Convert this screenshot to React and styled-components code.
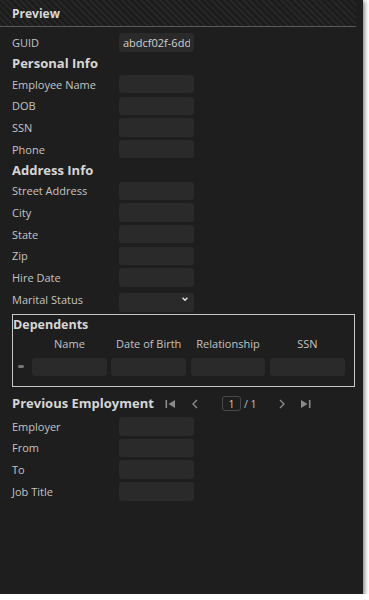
import React from 'react';
import styled, { createGlobalStyle } from 'styled-components';

const personal = ['Employee Name', 'DOB', 'SSN', 'Phone'];
const address = ['Street Address', 'City', 'State', 'Zip', 'Hire Date'];
const employment = ['Employer', 'From', 'To', 'Job Title'];
const depColumns = ['Name', 'Date of Birth', 'Relationship', 'SSN'];

export default function App() {
  return (
    <>
      <GlobalStyle />
      <Panel>
        <Content>
          <Header>Preview</Header>
          <Body>
            <Row>
              <Label>GUID</Label>
              <Field defaultValue="abdcf02f-6dd4-4c2e" readOnly />
            </Row>

            <SectionTitle>Personal Info</SectionTitle>
            {personal.map((l) => (
              <Row key={l}>
                <Label>{l}</Label>
                <Field />
              </Row>
            ))}

            <SectionTitle>Address Info</SectionTitle>
            {address.map((l) => (
              <Row key={l}>
                <Label>{l}</Label>
                <Field />
              </Row>
            ))}
            <Row>
              <Label>Marital Status</Label>
              <SelectWrap>
                <Select defaultValue="">
                  <option value=""></option>
                  <option>Single</option>
                  <option>Married</option>
                </Select>
                <Chevron viewBox="0 0 10 10">
                  <path d="M2 3.5 L5 6.5 L8 3.5" />
                </Chevron>
              </SelectWrap>
            </Row>

            <DepBox>
              <DepTitle>Dependents</DepTitle>
              <DepGrid>
                <span />
                {depColumns.map((c) => (
                  <ColHead key={c}>{c}</ColHead>
                ))}
                <Dash />
                {depColumns.map((c) => (
                  <Field key={c} $wide />
                ))}
              </DepGrid>
            </DepBox>

            <PrevHeader>
              <PrevTitle>Previous Employment</PrevTitle>
              <Pager>
                <PagerIcon viewBox="0 0 11 10" $w={11} $fill>
                  <rect x="0.5" y="1" width="1.6" height="8" />
                  <path d="M10 1 L10 9 L3.5 5 Z" />
                </PagerIcon>
                <PagerIcon viewBox="0 0 6 10" $w={6} $gap={16}>
                  <path d="M5 1 L1 5 L5 9" />
                </PagerIcon>
                <PageBox>1</PageBox>
                <PageCount>/ 1</PageCount>
                <PagerIcon viewBox="0 0 6 10" $w={6} $gap={22}>
                  <path d="M1 1 L5 5 L1 9" />
                </PagerIcon>
                <PagerIcon viewBox="0 0 11 10" $w={11} $gap={15} $fill>
                  <path d="M1 1 L1 9 L7.5 5 Z" />
                  <rect x="8.9" y="1" width="1.6" height="8" />
                </PagerIcon>
              </Pager>
            </PrevHeader>
            {employment.map((l) => (
              <Row key={l}>
                <Label>{l}</Label>
                <Field />
              </Row>
            ))}
          </Body>
        </Content>
      </Panel>
    </>
  );
}

/******************** styled components ************************/

const GlobalStyle = createGlobalStyle`
  body {
    margin: 0;
    background: #ffffff;
    font-family: 'Open Sans', 'Noto Sans', sans-serif;
  }
`;

const Panel = styled.div`
  width: 363px;
  height: 595px;
  background: #1e1e1e;
  box-shadow: 2px 2px 4px rgba(0, 0, 0, 0.45);
  padding-right: 7px;
  box-sizing: border-box;
`;

const Content = styled.div`
  width: 356px;
`;

const Header = styled.div`
  height: 26px;
  border-top: 1px solid #3c3c3c;
  border-bottom: 1px solid #5a5a5a;
  box-sizing: content-box;
  margin-top: -1px;
  padding-left: 12px;
  display: flex;
  align-items: center;
  font-size: 12px;
  font-weight: 700;
  color: #d8d8d8;
  background: repeating-linear-gradient(
    45deg,
    #262626 0px,
    #262626 2px,
    #1c1c1c 2px,
    #1c1c1c 4.5px
  );
`;

const Body = styled.div`
  padding: 4.7px 0 0 12px;
`;

const Row = styled.div`
  display: grid;
  grid-template-columns: 107px 75px;
  align-items: center;
  height: 21.67px;
`;

const Label = styled.span`
  font-size: 11px;
  color: #c4c4c4;
  white-space: nowrap;
`;

const Field = styled.input`
  box-sizing: border-box;
  width: ${(p) => (p.$wide ? '100%' : '75px')};
  height: 18.5px;
  border: none;
  border-radius: 3px;
  background: #2a2a2a;
  color: #d0d0d0;
  font-family: 'Open Sans', sans-serif;
  font-size: 11px;
  padding: 0 4px;
  outline: none;
`;

const SectionTitle = styled.div`
  height: 20px;
  display: flex;
  align-items: center;
  font-size: 13px;
  font-weight: 700;
  color: #d6d6d6;
`;

const SelectWrap = styled.div`
  position: relative;
  width: 75px;
  height: 18.5px;
`;

const Select = styled.select`
  appearance: none;
  width: 100%;
  height: 100%;
  border: none;
  border-radius: 3px;
  background: #2a2a2a;
  color: #d0d0d0;
  outline: none;
`;

const Chevron = styled.svg`
  position: absolute;
  right: 5px;
  top: 5px;
  width: 8px;
  height: 8px;
  fill: none;
  stroke: #e6e6e6;
  stroke-width: 1.8;
  pointer-events: none;
`;

const DepBox = styled.div`
  margin-top: 4.3px;
  width: 343.4px;
  height: 72.3px;
  box-sizing: border-box;
  border: 1px solid #c8c8c8;
`;

const DepTitle = styled.div`
  height: 19px;
  display: flex;
  align-items: center;
  font-size: 12.5px;
  font-weight: 700;
  color: #d6d6d6;
`;

const DepGrid = styled.div`
  display: grid;
  grid-template-columns: 14.4px repeat(4, 74.5px);
  grid-template-rows: 19px 18.5px;
  column-gap: 4.8px;
  row-gap: 4.3px;
  align-items: center;
`;

const ColHead = styled.span`
  text-align: center;
  font-size: 11px;
  color: #c4c4c4;
  white-space: nowrap;
`;

const Dash = styled.span`
  justify-self: center;
  width: 6px;
  height: 3px;
  border-radius: 1.5px;
  background: #767676;
  margin-left: 2px;
`;

const PrevHeader = styled.div`
  margin-top: 3px;
  height: 26px;
  display: flex;
  align-items: center;
`;

const PrevTitle = styled.div`
  width: 153px;
  flex-shrink: 0;
  font-size: 13px;
  font-weight: 700;
  color: #d6d6d6;
  white-space: nowrap;
`;

const Pager = styled.div`
  display: flex;
  align-items: center;
  margin-top: 2px;
`;

const PagerIcon = styled.svg`
  width: ${(p) => p.$w}px;
  height: 10px;
  margin-left: ${(p) => p.$gap || 0}px;
  fill: ${(p) => (p.$fill ? '#8a8a8a' : 'none')};
  stroke: ${(p) => (p.$fill ? 'none' : '#8a8a8a')};
  stroke-width: 1.4;
`;

const PageBox = styled.div`
  margin-left: 24px;
  width: 19px;
  height: 15px;
  box-sizing: border-box;
  border: 1px solid #4a4a4a;
  border-radius: 3px;
  font-size: 10.5px;
  color: #c8c8c8;
  display: flex;
  align-items: center;
  justify-content: center;
`;

const PageCount = styled.span`
  margin-left: 3px;
  font-size: 10.5px;
  color: #c0c0c0;
  white-space: nowrap;
`;
